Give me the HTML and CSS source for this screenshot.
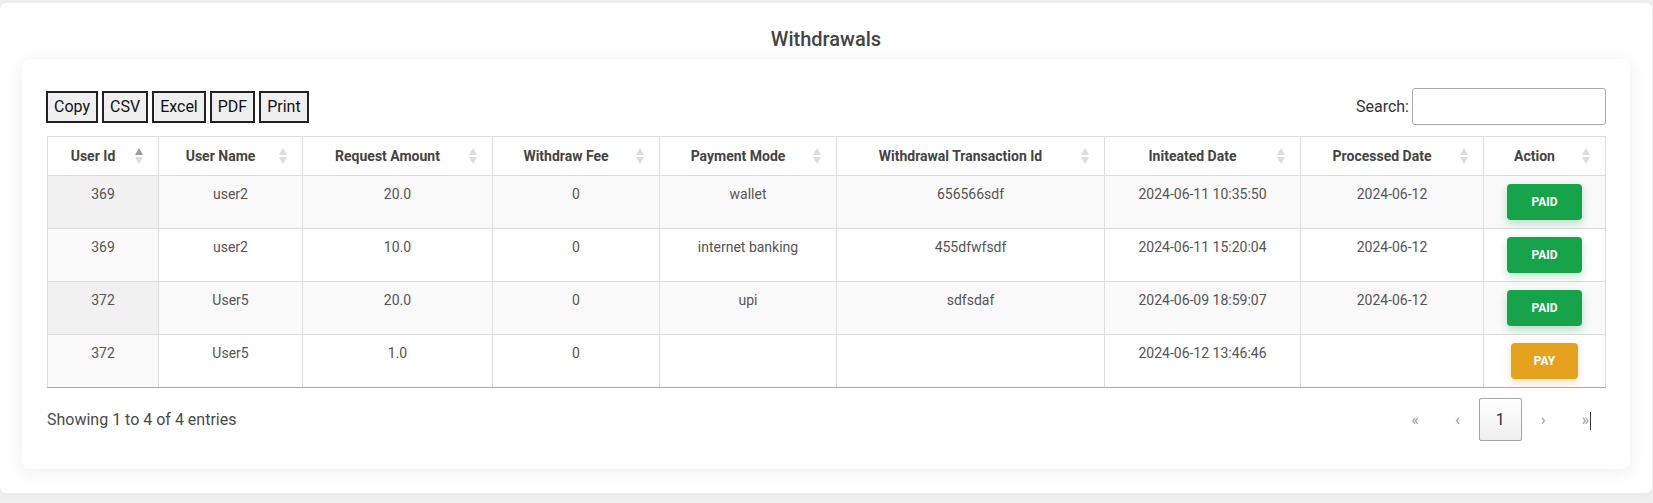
FILE: index.html
```html
<!DOCTYPE html>
<html lang="en">
<head>
<meta charset="utf-8">
<title>Withdrawals</title>
<link rel="stylesheet" href="styles.css">
</head>
<body>
<div class="panel">
  <h2 class="title">Withdrawals</h2>
  <div class="card">
    <div class="toolbar">
      <div class="export">
        <button class="exp-btn">Copy</button>
        <button class="exp-btn">CSV</button>
        <button class="exp-btn">Excel</button>
        <button class="exp-btn">PDF</button>
        <button class="exp-btn">Print</button>
      </div>
      <label class="search">Search:<input type="search" class="search-input"></label>
    </div>
    <table class="grid">
      <colgroup>
        <col class="c1"><col class="c2"><col class="c3"><col class="c4"><col class="c5"><col class="c6"><col class="c7"><col class="c8"><col class="c9">
      </colgroup>
      <thead>
        <tr>
          <th class="sort asc">User Id</th>
          <th class="sort">User Name</th>
          <th class="sort">Request Amount</th>
          <th class="sort">Withdraw Fee</th>
          <th class="sort">Payment Mode</th>
          <th class="sort">Withdrawal Transaction Id</th>
          <th class="sort">Initeated Date</th>
          <th class="sort">Processed Date</th>
          <th class="sort">Action</th>
        </tr>
      </thead>
      <tbody>
        <tr class="odd">
          <td class="sorted">369</td><td>user2</td><td>20.0</td><td>0</td><td>wallet</td><td>656566sdf</td><td>2024-06-11 10:35:50</td><td>2024-06-12</td>
          <td><span class="act paid">PAID</span></td>
        </tr>
        <tr class="even">
          <td class="sorted">369</td><td>user2</td><td>10.0</td><td>0</td><td>internet banking</td><td>455dfwfsdf</td><td>2024-06-11 15:20:04</td><td>2024-06-12</td>
          <td><span class="act paid">PAID</span></td>
        </tr>
        <tr class="odd">
          <td class="sorted">372</td><td>User5</td><td>20.0</td><td>0</td><td>upi</td><td>sdfsdaf</td><td>2024-06-09 18:59:07</td><td>2024-06-12</td>
          <td><span class="act paid">PAID</span></td>
        </tr>
        <tr class="even">
          <td class="sorted">372</td><td>User5</td><td>1.0</td><td>0</td><td></td><td></td><td>2024-06-12 13:46:46</td><td></td>
          <td><span class="act pay">PAY</span></td>
        </tr>
      </tbody>
    </table>
    <div class="footer">
      <div class="info">Showing 1 to 4 of 4 entries</div>
      <div class="pager">
        <span class="pg disabled">«</span>
        <span class="pg disabled">‹</span>
        <span class="pg current">1</span>
        <span class="pg disabled">›</span>
        <span class="pg disabled">»<span class="caret"></span></span>
      </div>
    </div>
  </div>
</div>
</body>
</html>
```
FILE: styles.css
```css
html, body {
  margin: 0;
  padding: 0;
}
body {
  background: #f0f0f0;
  font-family: Roboto, "Liberation Sans", Arial, sans-serif;
  color: #555;
  height: 503px;
}
.panel {
  margin: 3px 1px 0 0;
  padding: 24px 22px 24px;
  background: #fff;
  border-radius: 6px;
  box-shadow: 0 2px 8px rgba(0, 0, 0, 0.04);
}
.title {
  margin: 0 0 8px;
  font-size: 20px;
  line-height: 24px;
  font-weight: 500;
  color: #444;
  text-align: center;
}
.card {
  background: #fff;
  border-radius: 8px;
  box-shadow: 0 3px 18px rgba(0, 0, 0, 0.07);
  padding: 29px 24px 28px 25px;
}
.toolbar {
  display: flex;
  justify-content: space-between;
  align-items: center;
  height: 37px;
}
.export {
  display: flex;
  gap: 4px;
  margin-left: -1px;
}
.exp-btn {
  margin: 0;
  font-family: Roboto, "Liberation Sans", Arial, sans-serif;
  font-size: 16px;
  line-height: 20px;
  padding: 4px 6px;
  border: 2px solid #222;
  border-radius: 0;
  background: #efefef;
  color: #111;
}
.search {
  display: flex;
  align-items: center;
  font-size: 16px;
  color: #333;
}
.search-input {
  margin: 0 0 0 3px;
  box-sizing: border-box;
  width: 194px;
  height: 37px;
  border: 1px solid #aaa;
  border-radius: 3px;
  padding: 5px;
  background: #fff;
}
.grid {
  margin-top: 11px;
  width: 100%;
  table-layout: fixed;
  border-collapse: collapse;
  font-size: 14px;
  border-bottom: 1px solid #aaa;
}
.c1 { width: 111px; }
.c2 { width: 144px; }
.c3 { width: 190px; }
.c4 { width: 167px; }
.c5 { width: 177px; }
.c6 { width: 268px; }
.c7 { width: 196px; }
.c8 { width: 183px; }
.c9 { width: 122px; }
.grid th {
  position: relative;
  padding: 10px 30px 10px 10px;
  line-height: 18px;
  font-weight: 700;
  color: #444;
  text-align: center;
  border: 1px solid #ddd;
  background: #fff;
  white-space: nowrap;
}
.grid th.sort::before,
.grid th.sort::after {
  content: "";
  position: absolute;
  right: 15px;
  width: 0;
  height: 0;
  border-left: 4px solid transparent;
  border-right: 4px solid transparent;
}
.grid th.sort::before {
  top: calc(50% - 8px);
  border-bottom: 7.5px solid #dcdcdc;
}
.grid th.sort::after {
  top: calc(50% + 1px);
  border-top: 7px solid #dcdcdc;
}
.grid th.sort.asc::before {
  border-bottom-color: #9c9c9c;
}
.grid td {
  padding: 8px 10px;
  line-height: 21px;
  text-align: center;
  vertical-align: top;
  border: 1px solid #ddd;
  color: #555;
}
.grid tr.odd td { background: #f9f9f9; }
.grid tr.odd td.sorted { background: #f1f1f1; }
.grid tr.even td { background: #fff; }
.grid tr.even td.sorted { background: #fafafa; }
.grid tr:last-child td { border-bottom: 1px solid #aaa; }
.act {
  display: inline-block;
  height: 36px;
  line-height: 36px;
  border-radius: 4px;
  color: #fff;
  font-size: 12px;
  font-weight: 700;
  vertical-align: top;
}
.paid {
  padding: 0 24px;
  background: #16a34a;
  box-shadow: 0 4px 8px rgba(22, 163, 74, 0.28);
}
.pay {
  padding: 0 23px;
  background: #e5a21f;
  box-shadow: 0 4px 8px rgba(229, 162, 31, 0.3);
}
.footer {
  margin-top: 10px;
  display: flex;
  justify-content: space-between;
  align-items: center;
}
.info {
  font-size: 16px;
  color: #4a4a4a;
}
.pager {
  display: flex;
  align-items: center;
}
.pg {
  box-sizing: border-box;
  display: inline-block;
  margin-left: 2px;
  padding: 8px 16px;
  font-size: 16px;
  line-height: 25px;
  border: 1px solid transparent;
  border-radius: 2px;
  color: #999;
}
.pg.current {
  color: #333;
  border-color: #a5a5a5;
  background: linear-gradient(to bottom, #ffffff 0%, #efefef 100%);
}
.caret {
  display: inline-block;
  width: 1px;
  height: 18px;
  margin-left: 1px;
  margin-right: -2px;
  background: #333;
  vertical-align: middle;
}
```
